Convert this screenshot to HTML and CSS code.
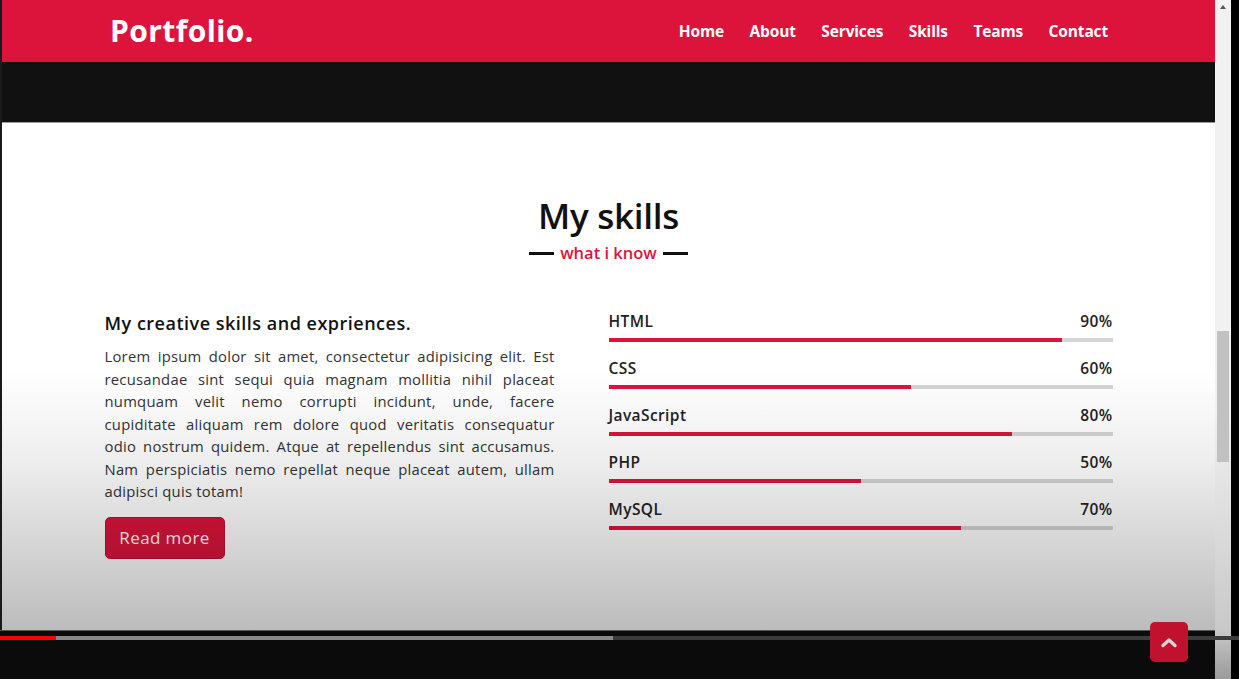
FILE: index.html
```html
<!DOCTYPE html>
<html lang="en">
<head>
<meta charset="utf-8">
<title>Portfolio - My skills</title>
<link rel="stylesheet" href="styles.css">
</head>
<body>
<div class="screen">
  <div class="edge"></div>
  <div class="viewport">
    <header class="navbar">
      <div class="logo">Portfolio.</div>
      <nav class="menu">
        <a href="#">Home</a>
        <a href="#">About</a>
        <a href="#">Services</a>
        <a href="#">Skills</a>
        <a href="#">Teams</a>
        <a href="#">Contact</a>
      </nav>
    </header>
    <div class="hero-band"></div>
    <section class="skills">
      <h2 class="title">My skills</h2>
      <div class="subtitle"><span>what i know</span></div>
      <div class="skills-content">
        <div class="column left">
          <h3 class="text">My creative skills and expriences.</h3>
          <p>
            <span class="ln">Lorem ipsum dolor sit amet, consectetur adipisicing elit. Est</span>
            <span class="ln">recusandae sint sequi quia magnam mollitia nihil placeat</span>
            <span class="ln">numquam velit nemo corrupti incidunt, unde, facere</span>
            <span class="ln">cupiditate aliquam rem dolore quod veritatis consequatur</span>
            <span class="ln">odio nostrum quidem. Atque at repellendus sint accusamus.</span>
            <span class="ln">Nam perspiciatis nemo repellat neque placeat autem, ullam</span>
            <span class="ln last">adipisci quis totam!</span>
          </p>
          <a class="btn" href="#">Read more</a>
        </div>
        <div class="column right">
          <div class="bars">
            <div class="info"><span>HTML</span><span>90%</span></div>
            <div class="line"><div class="fill" style="width:90%"></div></div>
          </div>
          <div class="bars">
            <div class="info"><span>CSS</span><span>60%</span></div>
            <div class="line"><div class="fill" style="width:60%"></div></div>
          </div>
          <div class="bars">
            <div class="info"><span>JavaScript</span><span>80%</span></div>
            <div class="line"><div class="fill" style="width:80%"></div></div>
          </div>
          <div class="bars">
            <div class="info"><span>PHP</span><span>50%</span></div>
            <div class="line"><div class="fill" style="width:50%"></div></div>
          </div>
          <div class="bars">
            <div class="info"><span>MySQL</span><span>70%</span></div>
            <div class="line"><div class="fill" style="width:70%"></div></div>
          </div>
        </div>
      </div>
    </section>
    <div class="shade"></div>
  </div>
  <div class="scrollbar">
    <span class="arrow"></span>
    <span class="thumb"></span>
  </div>
  <div class="edge-right"></div>

  <div class="player">
    <div class="progress">
      <span class="played"></span>
      <span class="loaded"></span>
    </div>
  </div>
  <a class="scroll-up" href="#">
    <svg width="18" height="12" viewBox="0 0 18 12"><path d="M3 9.5 L9 4 L15 9.5" fill="none" stroke="#d4d4d4" stroke-width="3.4" stroke-linecap="round" stroke-linejoin="round"/></svg>
  </a>
</div>
</body>
</html>
```
FILE: styles.css
```css
* { box-sizing: border-box; margin: 0; padding: 0; }
html, body { width: 1239px; height: 679px; overflow: hidden; background: #000; }
body { font-family: "Open Sans", "Liberation Sans", sans-serif; }

.screen {
  position: relative;
  display: flex;
  width: 1239px;
  height: 679px;
  background: #000;
}
.edge { width: 2px; background: #1a1a1a; }
.edge-right { width: 8px; background: #000; }

.viewport {
  position: relative;
  width: 1213px;
  background: #fff;
  display: flex;
  flex-direction: column;
}

/* header */
.navbar {
  height: 62px;
  background: #dc143c;
  display: flex;
  align-items: center;
  justify-content: space-between;
  padding: 0 107px 0 108px;
}
.logo {
  color: #fff;
  font-family: "Open Sans", sans-serif;
  font-weight: 700;
  font-size: 30px;
  letter-spacing: 0.4px;
  padding-bottom: 2px;
}
.menu { display: flex; gap: 25.5px; }
.menu a {
  color: #fff;
  text-decoration: none;
  font-family: "Open Sans", sans-serif;
  font-weight: 700;
  font-size: 15.5px;
  letter-spacing: -0.15px;
}
.hero-band {
  height: 61px;
  background: #111;
  border-bottom: 1px solid #9a9a9a;
}

/* skills section */
.skills {
  flex: 1;
  padding-top: 70px;
  background: #fff;
}
.title {
  text-align: center;
  font-family: "Open Sans", sans-serif;
  font-weight: 600;
  font-size: 35px;
  line-height: 46px;
  color: #111;
  letter-spacing: -0.3px;
}
.subtitle {
  margin-top: 2px;
  display: flex;
  justify-content: center;
  align-items: center;
  gap: 6px;
  line-height: 24px;
}
.subtitle::before, .subtitle::after {
  content: "";
  width: 25px;
  height: 3px;
  background: #111;
}
.subtitle span {
  color: #dc143c;
  font-family: "Open Sans", sans-serif;
  font-weight: 600;
  font-size: 16.5px;
}

.skills-content {
  width: 1008px;
  margin: 45px auto 0;
  display: flex;
  justify-content: space-between;
}
.column.left { width: 450px; }
.column.right { width: 504px; }

.text {
  font-family: "Open Sans", sans-serif;
  font-weight: 600;
  font-size: 18px;
  line-height: 24px;
  color: #111;
  margin-top: 1px;
  letter-spacing: 0.5px;
}
.column.left p {
  margin-top: 10px;
  font-size: 14.8px;
  line-height: 22.5px;
  letter-spacing: 0.25px;
  color: #333;
}
.ln {
  display: block;
  text-align: justify;
  text-align-last: justify;
}
.ln.last { text-align-last: left; }
.btn {
  display: inline-flex;
  align-items: center;
  justify-content: center;
  margin-top: 14px;
  width: 120px;
  height: 42px;
  background: #dc143c;
  border: 1px solid #c0102f;
  border-radius: 5px;
  color: #fff;
  text-decoration: none;
  font-size: 17px;
  letter-spacing: 0.4px;
}

.bars { margin-bottom: 15px; }
.info {
  display: flex;
  justify-content: space-between;
  font-size: 15.5px;
  line-height: 22px;
  font-weight: 600;
  letter-spacing: 0.4px;
  color: #222;
}
.line {
  margin-top: 6px;
  height: 4px;
  background: #d4d4d4;
}
.fill {
  height: 100%;
  background: #dc143c;
}

/* video overlay shade */
.shade {
  position: absolute;
  left: 0;
  right: 0;
  top: 370px;
  bottom: 0;
  background: linear-gradient(to bottom, rgba(0,0,0,0) 0%, rgba(0,0,0,0.07) 30%, rgba(0,0,0,0.22) 72%, rgba(0,0,0,0.32) 100%);
  pointer-events: none;
}

/* scrollbar */
.scrollbar {
  position: relative;
  width: 16px;
  background: linear-gradient(to bottom, #f1f1f1 0%, #f1f1f1 60%, #c8c8c8 93%, #9a9a9a 100%);
}
.arrow {
  position: absolute;
  top: 5px;
  left: 5px;
  width: 0;
  height: 0;
  border-left: 3px solid transparent;
  border-right: 3px solid transparent;
  border-bottom: 4px solid #555;
}
.thumb {
  position: absolute;
  top: 331px;
  left: 2px;
  width: 12px;
  height: 131px;
  background: #c1c1c1;
}

/* player bar */
.player {
  position: absolute;
  left: 0;
  width: 1215px;
  top: 630px;
  bottom: 0;
  background: #0b0b0b;
  border-top: 1px solid #555;
}
.progress {
  position: absolute;
  left: 0;
  top: 5px;
  width: 1239px;
  height: 4px;
  background: #3c3c3c;
}
.progress .played {
  position: absolute;
  left: 0; top: 0;
  width: 56px; height: 4px;
  background: #ff0000;
}
.progress .loaded {
  position: absolute;
  left: 56px; top: 0;
  width: 557px; height: 4px;
  background: #8a8a8a;
}
.scroll-up {
  position: absolute;
  left: 1150px;
  top: 622px;
  width: 38px;
  height: 40px;
  border-radius: 5px;
  background: #c0122f;
  display: flex;
  align-items: center;
  justify-content: center;
}
```
